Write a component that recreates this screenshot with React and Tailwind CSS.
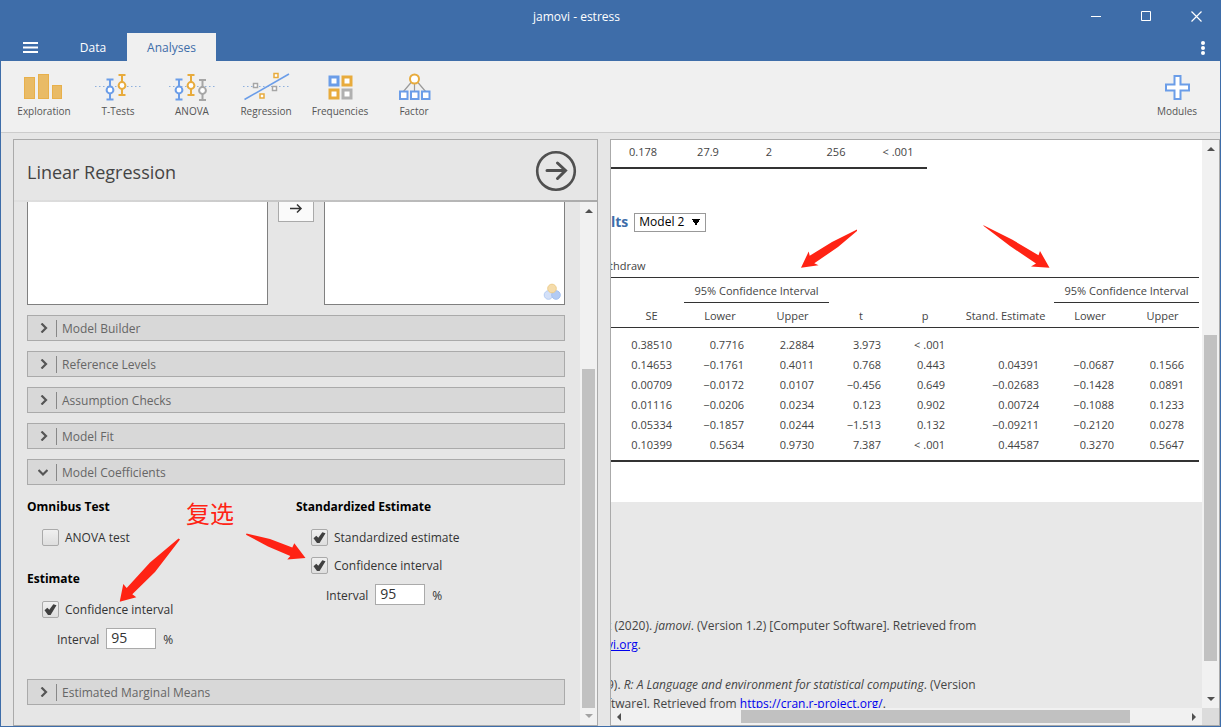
import React from 'react';

const BLUE = '#6b9de8';
const GOLD = '#e8ab3c';
const GREY = '#a6a6a6';

const ErrorBar = ({ x, top, color }) => (
    <g stroke={color} strokeWidth="2" fill="none">
        <path d={`M${x} ${top}V${top + 20}M${x - 3.5} ${top}h7M${x - 3.5} ${top + 20}h7`} />
        <circle cx={x} cy={top + 10.5} r="3.4" fill="#fff" />
    </g>
);

const Dotted = () => (
    <path d="M1 15.5H47" stroke="#8fb0dd" strokeWidth="1" strokeDasharray="1.5 2.5" />
);

const Box = ({ x, y, size, color, width = 2 }) => (
    <rect x={x} y={y} width={size} height={size} fill="#fff" stroke={color} strokeWidth={width} />
);

const drawings = {
    Exploration: (
        <g fill="#e9bb66" stroke="#e8b04b">
            <rect x="4.5" y="6.5" width="10" height="21" />
            <rect x="18.5" y="3.5" width="10" height="24" />
            <rect x="32.5" y="14.5" width="9" height="13" />
        </g>
    ),
    'T-Tests': (
        <>
            <Dotted />
            <ErrorBar x={16} top={8.5} color={BLUE} />
            <ErrorBar x={28} top={4} color={GOLD} />
        </>
    ),
    ANOVA: (
        <>
            <Dotted />
            <ErrorBar x={11} top={8.5} color={BLUE} />
            <ErrorBar x={23} top={4} color={GOLD} />
            <ErrorBar x={34.5} top={9} color={GREY} />
        </>
    ),
    Regression: (
        <>
            <Dotted />
            <path d="M2.5 28.5L47 3" stroke={BLUE} strokeWidth="1.6" />
            <Box x={11.5} y={12.5} size={4} color={GREY} width={1.5} />
            <Box x={30.5} y={15.5} size={4} color={GREY} width={1.5} />
            <Box x={32} y={2.5} size={4} color={GOLD} width={1.5} />
            <Box x={18} y={23} size={4} color={GOLD} width={1.5} />
        </>
    ),
    Frequencies: (
        <>
            <Box x={14} y={6} size={8} color={BLUE} width={3} />
            <Box x={27} y={6} size={8} color={GOLD} width={3} />
            <Box x={14} y={19} size={8} color={GOLD} width={3} />
            <Box x={27} y={19} size={8} color="#b0b0b0" width={3} />
        </>
    ),
    Factor: (
        <>
            <path d="M24.5 12V21M21.5 11L13 21M27.5 11L36 21" stroke="#9a9a9a" strokeWidth="1.2" />
            <circle cx="24.5" cy="8" r="4.5" fill="#fff" stroke={GOLD} strokeWidth="2" />
            <Box x={10} y={20.5} size={7.5} color={BLUE} />
            <Box x={21} y={20.5} size={7.5} color={BLUE} />
            <Box x={32} y={20.5} size={7.5} color={BLUE} />
        </>
    ),
    Modules: (
        <path
            d="M21.5 5h6v8.5H36v6h-8.5V28h-6v-8.5H13v-6h8.5z"
            fill="#fff"
            stroke={BLUE}
            strokeWidth="2"
        />
    ),
};

const ToolButton = ({ name }) => (
    <button className="flex w-[74px] flex-col items-center text-[10px] leading-4 text-[#555]">
        <svg className="h-[30px] w-12" viewBox="0 0 48 30" fill="none">
            {drawings[name]}
        </svg>
        <span className="mt-0.5">{name}</span>
    </button>
);

const TitleBar = () => (
    <header className="text-white">
        <div className="flex h-8 items-center">
            <h1 className="flex-1 pl-20 pt-0.5 text-center text-xs">jamovi - estress</h1>
            <div className="flex gap-0.5">
                <button aria-label="Minimize" className="flex h-8 w-12 items-center justify-center">
                    <svg width="10" height="10" stroke="#fff" fill="none"><path d="M0 5.5h10" /></svg>
                </button>
                <button aria-label="Maximize" className="flex h-8 w-12 items-center justify-center">
                    <svg width="10" height="10" stroke="#fff" fill="none"><path d="M.5.5h9v9h-9z" /></svg>
                </button>
                <button aria-label="Close" className="flex h-8 w-12 items-center justify-center">
                    <svg width="11" height="11" stroke="#fff" fill="none" strokeWidth="1.2"><path d="M.5.5l10 10M10.5.5l-10 10" /></svg>
                </button>
            </div>
        </div>
        <nav className="mt-px flex h-7 items-stretch text-xs">
            <button aria-label="Menu" className="flex w-[58px] items-center justify-center pt-px">
                <svg width="15" height="11" stroke="#fff" strokeWidth="2"><path d="M0 1h15M0 5.5h15M0 10h15" /></svg>
            </button>
            <button className="w-[68px] pt-0.5">Data</button>
            <button className="w-[89px] bg-[#f0f0f0] pt-0.5 text-[#3e6da9]">Analyses</button>
            <div className="flex-1" />
            <button aria-label="More" className="flex w-[34px] items-center justify-center pt-0.5">
                <svg width="4" height="14" fill="#fff">
                    <circle cx="2" cy="2" r="2" />
                    <circle cx="2" cy="7" r="2" />
                    <circle cx="2" cy="12" r="2" />
                </svg>
            </button>
        </nav>
    </header>
);

const Toolbar = () => (
    <div className="flex border-b border-[#cccccc] bg-[#f0f0f0] px-1.5 pb-[13px] pt-2.5">
        {['Exploration', 'T-Tests', 'ANOVA', 'Regression', 'Frequencies', 'Factor'].map((name) => (
            <ToolButton key={name} name={name} />
        ))}
        <div className="flex-1" />
        <ToolButton name="Modules" />
    </div>
);

const Arrow = ({ d, color = '#505050' }) => (
    <svg className="shrink-0" width="8" height="8" fill={color}><path d={d} /></svg>
);
const UP = 'M0 6L4 2L8 6z';
const DOWN = 'M0 2L4 6L8 2z';
const LEFT = 'M6 0L2 4L6 8z';
const RIGHT = 'M2 0L6 4L2 8z';

const Section = ({ title, open }) => (
    <button className="flex h-[26px] w-full items-center border border-[#aaaaaa] bg-[#d8d8d8] text-left text-xs text-[#666]">
        <svg className="ml-2.5 mr-2" width="10" height="10" fill="none" stroke="#555" strokeWidth="2.2">
            <path d={open ? 'M.5 3L5 7.5L9.5 3' : 'M3.5 .5L8 5L3.5 9.5'} />
        </svg>
        <span className="flex h-[17px] items-center border-l border-[#888] pl-[5px] pt-0.5">{title}</span>
    </button>
);

const Check = ({ label, checked }) => (
    <label className="ml-[15px] flex h-5 items-center gap-1.5 text-xs text-[#333]">
        <span className="grid">
            <input
                type="checkbox"
                defaultChecked={checked}
                className="peer col-start-1 row-start-1 h-[17px] w-[17px] appearance-none rounded-xs border border-[#aaaaaa] bg-linear-to-b from-[#f0f0f0] to-[#dedede]"
            />
            <svg className="pointer-events-none invisible col-start-1 row-start-1 peer-checked:visible" width="17" height="17" fill="#404040">
                <path d="M2.5 9.3L5.3 6.8L7.3 8.8L11.3 3.2L14.5 4.2L8.6 14H6z" />
            </svg>
        </span>
        <span className="pt-0.5">{label}</span>
    </label>
);

const Interval = () => (
    <label className="ml-[30px] flex h-[21px] items-center text-xs text-[#333]">
        <span className="pt-0.5">Interval</span>
        <input
            type="text"
            defaultValue="95"
            className="mx-[7px] h-[21px] w-[50px] border border-[#aaaaaa] bg-white px-1 pb-0.5 text-sm leading-4 text-[#333]"
        />
        <span className="pt-0.5">%</span>
    </label>
);

const Heading = ({ children }) => (
    <h3 className="h-5 pt-px text-xs leading-5 font-bold">{children}</h3>
);

const OptionsPanel = () => (
    <section className="flex w-[585px] shrink-0 flex-col border border-[#aaaaaa] bg-[#e6e6e6]">
        <div className="flex h-[60px] shrink-0 items-center justify-between pl-[13px] pr-5 pt-0.5">
            <h2 className="pt-0.5 text-lg text-[#444]">Linear Regression</h2>
            <button aria-label="Close options">
                <svg width="42" height="42" fill="none" stroke="#505050" strokeWidth="3">
                    <circle cx="21" cy="21" r="18.8" strokeWidth="2.6" />
                    <path d="M12 20.5H30M22.5 13L30.5 20.5L22.5 28.5" strokeLinecap="round" />
                </svg>
            </button>
        </div>
        <div className="h-0.5 shrink-0 bg-linear-to-r from-[#e0e0e0] via-[#c4c4c4] to-[#aaaaaa]" />
        <div className="flex min-h-0 flex-1">
            <div className="flex flex-1 flex-col overflow-hidden pl-[13px] pr-[15px]">
                <div className="grid grid-cols-[1fr_auto_1fr] items-start gap-2.5">
                    <div className="h-[103px] border border-t-0 border-[#808080] bg-white" />
                    <button aria-label="Move" className="flex h-5 w-9 justify-center border border-t-0 border-[#aaaaaa] bg-[#fafafa]">
                        <svg width="14" height="14" fill="none" stroke="#333" strokeWidth="1.5">
                            <path d="M1 6.5H12M8 2.5L12 6.5L8 10.5" />
                        </svg>
                    </button>
                    <div className="flex h-[103px] items-end justify-end border border-t-0 border-[#808080] bg-white p-[3px]">
                        <svg width="18" height="18">
                            <circle cx="5.5" cy="12" r="4.3" fill="#d3e0f8" stroke="#b5cdf3" />
                            <circle cx="13" cy="12" r="4.3" fill="#b3cbf3" stroke="#a5c1f0" />
                            <circle cx="9" cy="5.5" r="4.3" fill="#f5dcab" stroke="#edcd8c" />
                        </svg>
                    </div>
                </div>
                <div className="mt-2.5 flex flex-col gap-2.5">
                    <Section title="Model Builder" />
                    <Section title="Reference Levels" />
                    <Section title="Assumption Checks" />
                    <Section title="Model Fit" />
                    <Section title="Model Coefficients" open />
                </div>
                <div className="flex pb-[30px] pt-[11px]">
                    <div className="w-1/2">
                        <Heading>Omnibus Test</Heading>
                        <div className="mb-[21px] mt-[11px]"><Check label="ANOVA test" /></div>
                        <Heading>Estimate</Heading>
                        <div className="mt-[11px] flex flex-col gap-[9px]">
                            <Check label="Confidence interval" checked />
                            <Interval />
                        </div>
                    </div>
                    <div className="w-1/2">
                        <Heading>Standardized Estimate</Heading>
                        <div className="mb-[9px] mt-[11px] flex flex-col gap-2">
                            <Check label="Standardized estimate" checked />
                            <Check label="Confidence interval" checked />
                        </div>
                        <Interval />
                    </div>
                </div>
                <Section title="Estimated Marginal Means" />
            </div>
            <div className="flex w-[17px] flex-col items-center bg-[#f1f1f1] pb-[5px] pt-[5px]">
                <Arrow d={UP} />
                <div className="flex-[154]" />
                <div className="w-[13px] flex-[339] bg-[#c1c1c1]" />
                <div className="h-1" />
                <Arrow d={DOWN} color="#a3a3a3" />
            </div>
        </div>
    </section>
);

const rows = [
    ['0.38510', '0.7716', '2.2884', '3.973', '< .001', '', '', ''],
    ['0.14653', '−0.1761', '0.4011', '0.768', '0.443', '0.04391', '−0.0687', '0.1566'],
    ['0.00709', '−0.0172', '0.0107', '−0.456', '0.649', '−0.02683', '−0.1428', '0.0891'],
    ['0.01116', '−0.0206', '0.0234', '0.123', '0.902', '0.00724', '−0.1088', '0.1233'],
    ['0.05334', '−0.1857', '0.0244', '−1.513', '0.132', '−0.09211', '−0.2120', '0.0278'],
    ['0.10399', '0.5634', '0.9730', '7.387', '< .001', '0.44587', '0.3270', '0.5647'],
];

// padding right of the figures, by column
const pads = ['pr-3', 'pr-3', 'pr-[15px]', 'pr-3', 'pr-3', 'pr-[15px]', 'pr-3', 'pr-[15px]'];

const FitTable = () => (
    <table className="w-[316px] table-fixed border-separate border-spacing-0 text-center text-[11px] leading-4 [&_td]:border-b-2 [&_td]:border-[#333] [&_td]:pb-[7px] [&_td]:pt-1">
        <colgroup>
            <col className="w-16" />
            <col className="w-[66px]" />
            <col className="w-14" />
            <col className="w-[78px]" />
            <col />
        </colgroup>
        <tbody>
            <tr>
                <td>0.178</td>
                <td>27.9</td>
                <td>2</td>
                <td>256</td>
                <td className="pr-1.5">&lt; .001</td>
            </tr>
        </tbody>
    </table>
);

const CoefficientsTable = () => (
    <table className="w-[588px] table-fixed border-separate border-spacing-0 text-[11px] leading-5">
        <colgroup>
            <col className="w-[73px]" />
            <col className="w-[72px]" />
            <col className="w-[73px]" />
            <col className="w-16" />
            <col className="w-16" />
            <col className="w-[97px]" />
            <col className="w-[72px]" />
            <col className="w-[73px]" />
        </colgroup>
        <thead className="[&_th]:border-[#333] [&_th]:pt-0.5 [&_th]:font-normal">
            <tr className="h-[26px] [&_th]:border-t">
                <th />
                <th colSpan={2} className="border-b">95% Confidence Interval</th>
                <th />
                <th />
                <th />
                <th colSpan={2} className="border-b">95% Confidence Interval</th>
            </tr>
            <tr className="h-[25px] [&_th]:border-b">
                <th className="pl-2">SE</th>
                <th>Lower</th>
                <th>Upper</th>
                <th>t</th>
                <th>p</th>
                <th>Stand. Estimate</th>
                <th>Lower</th>
                <th>Upper</th>
            </tr>
        </thead>
        <tbody className="text-right [&_tr:first-child_td]:pt-[7px] [&_tr:last-child_td]:border-b-2 [&_tr:last-child_td]:border-[#333] [&_tr:last-child_td]:pb-[5px]">
            {rows.map((row) => (
                <tr key={row[0]}>
                    {row.map((cell, i) => (
                        <td key={i} className={pads[i]}>{cell}</td>
                    ))}
                </tr>
            ))}
        </tbody>
    </table>
);

const ResultsPanel = () => (
    <section className="flex min-w-0 flex-1 flex-col border border-[#aaaaaa] bg-[#e8e8e8] text-[#444]">
        <div className="flex min-h-0 flex-1">
            <div className="min-w-0 flex-1 overflow-hidden text-xs">
                <div className="bg-white pb-10">
                    <FitTable />
                    <div className="mt-[43px] flex items-center gap-1.5">
                        <h2 className="text-sm leading-5 font-bold text-[#3e6da9]">lts</h2>
                        <select aria-label="Model" className="h-[19px] w-[72px] appearance-none border border-[#999] bg-white pl-1 text-xs leading-4 text-black [background-image:linear-gradient(to_bottom_right,#000_50%,transparent_50%),linear-gradient(to_bottom_left,#000_50%,transparent_50%)] [background-position:right_5px_top_5px,right_9px_top_5px] [background-repeat:no-repeat] [background-size:4px_7px]">
                            <option>Model 2</option>
                        </select>
                    </div>
                    <p className="-ml-0.5 mb-px mt-6 text-[11px] leading-5">thdraw</p>
                    <CoefficientsTable />
                </div>
                <div className="-ml-1 mt-[114px] leading-[19px]">
                    <p>t (2020). <i>jamovi</i>. (Version 1.2) [Computer Software]. Retrieved from</p>
                    <p><a href="#jamovi" className="text-[#0000ee] underline">vi.org</a>.</p>
                    <p className="mt-[21px]">9). <i>R: A Language and environment for statistical computing</i>. (Version</p>
                    <p>ftware]. Retrieved from <a href="#cran" className="text-[#0000ee] underline">https://cran.r-project.org/</a>.</p>
                </div>
            </div>
            <div className="flex w-[17px] flex-col items-center bg-[#f1f1f1] py-[5px]">
                <Arrow d={UP} />
                <div className="flex-[182]" />
                <div className="w-[13px] flex-[326] bg-[#c1c1c1]" />
                <div className="flex-[34]" />
                <Arrow d={DOWN} />
            </div>
        </div>
        <div className="flex h-[17px] shrink-0 bg-[#dcdcdc]">
            <div className="flex flex-1 items-center bg-[#f1f1f1] px-1">
                <Arrow d={LEFT} />
                <div className="flex-[118]" />
                <div className="h-[13px] flex-[388] bg-[#c1c1c1]" />
                <div className="flex-[60]" />
                <Arrow d={RIGHT} />
            </div>
            <div className="w-[17px]" />
        </div>
    </section>
);

// hand-drawn notes lying over the window
const Annotations = () => (
    <div className="pointer-events-none absolute inset-0">
        <svg className="absolute left-0 top-0" width="1100" height="620" fill="#ff2314">
            <path d="M180 539.5L155 572L132.3 594.3L136.3 597.3L119.7 601.7L123.3 584L126.7 588L150 562.5L178.5 538.5Z" />
            <path d="M246.5 533.5L270 539L292.3 547.5L294.3 543.3L305.5 558L287.3 559.5L290.3 556L268 546.5L246 534.8Z" />
            <path d="M857 229.5L857 231L838 247L814.3 263.3L818.5 265.3L801 267.7L808.7 251.5L809.7 255.7L832 242Z" />
            <path d="M983 225.5L984 225.5L1012 239.5L1038.5 255.3L1040 251L1049.5 267.7L1031 266.5L1036 263.5L1010 246Z" />
        </svg>
        <span className="absolute left-[186px] top-[495px] text-2xl leading-9 text-[#ff2314] font-['Noto_Sans_CJK_SC',sans-serif]">复选</span>
    </div>
);

export default function App() {
    return (
        <div className="relative flex h-screen flex-col overflow-hidden bg-[#3e6da9] px-px pb-px font-['Open_Sans','Noto_Sans',sans-serif]">
            <TitleBar />
            <Toolbar />
            <main className="flex min-h-0 flex-1 gap-3 bg-[#e6e6e6] pl-3 pt-1.5">
                <OptionsPanel />
                <ResultsPanel />
            </main>
            <Annotations />
        </div>
    );
}
